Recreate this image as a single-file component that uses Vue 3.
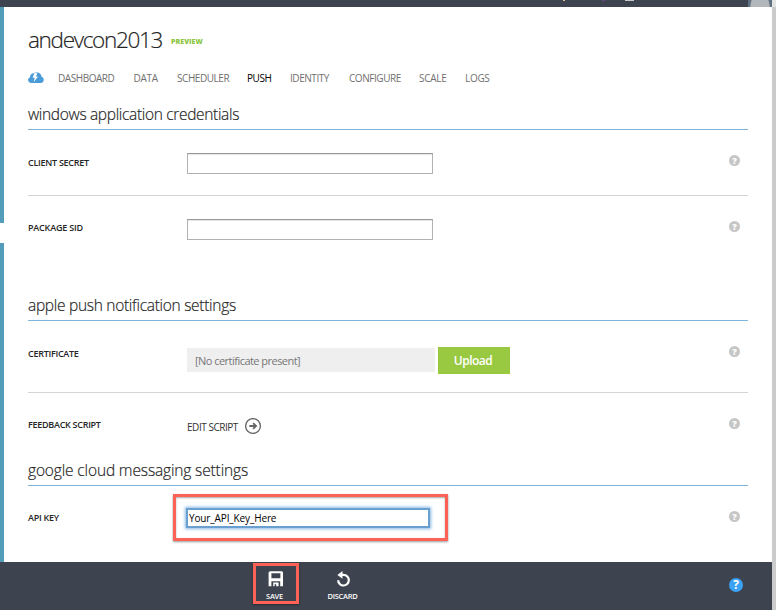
<script setup>
import { ref } from 'vue'

const tabs = ['DASHBOARD', 'DATA', 'SCHEDULER', 'PUSH', 'IDENTITY', 'CONFIGURE', 'SCALE', 'LOGS']
const active = ref('PUSH')
const clientSecret = ref('')
const packageSid = ref('')
const apiKey = ref('Your_API_Key_Here')
</script>

<template>
  <div class="shell">
    <header class="topbar">
      <div class="marks"><i class="m1"></i><i class="m2"></i><i class="m3"></i></div>
      <div class="avatar"><span></span></div>
    </header>
    <div class="body">
      <aside class="rail"><div class="rail-top"></div><div class="rail-bottom"></div></aside>
      <main class="content">
        <div class="title-row">
          <h1><span class="t-title">andevcon2013</span></h1>
          <span class="preview">PREVIEW</span>
        </div>
        <nav class="tabs">
          <svg class="cloud" width="16" height="12" viewBox="0 0 16 12">
            <path d="M3 11A3 3 0 0 1 2 5.2 4 4 0 0 1 5.5 1.2 5 5 0 0 1 9 .6 4.2 4.2 0 0 1 13.6 4.8 3.2 3.2 0 0 1 13 11Z" fill="#4a9bd8" />
            <path d="M6.6 .8 4.6 5.8H6.8L5.6 10.2 10 4.6H7.8L9.4 1.4Z" fill="#fff" />
          </svg>
          <a v-for="t in tabs" :key="t" :class="['tab', t.toLowerCase(), { active: t === active }]">{{ t }}</a>
        </nav>

        <section class="windows">
          <h2><span class="h-win">windows application credentials</span></h2>
          <div class="row r1">
            <label class="l-client">CLIENT SECRET</label>
            <div class="field"><input v-model="clientSecret" class="box" /></div>
            <span class="help">?</span>
          </div>
          <div class="row r2">
            <label class="l-package">PACKAGE SID</label>
            <div class="field"><input v-model="packageSid" class="box" /></div>
            <span class="help">?</span>
          </div>
        </section>

        <section class="apple">
          <h2><span class="h-apple">apple push notification settings</span></h2>
          <div class="row r3">
            <label class="l-cert">CERTIFICATE</label>
            <div class="field upload-field">
              <div class="file"><span>[No certificate present]</span></div>
              <button class="upload">Upload</button>
            </div>
            <span class="help">?</span>
          </div>
          <div class="row r4">
            <label class="l-feed">FEEDBACK SCRIPT</label>
            <div class="field edit">
              <span class="edit-text">EDIT SCRIPT</span>
              <svg width="17" height="17" viewBox="0 0 17 17" fill="none" stroke="#666">
                <circle cx="8" cy="8" r="7.4" stroke-width="1.3" />
                <path d="M4.3 8H11M8.1 5.1 11.1 8 8.1 10.9" stroke-width="1.8" />
              </svg>
            </div>
            <span class="help">?</span>
          </div>
        </section>

        <section class="google">
          <h2><span class="h-google">google cloud messaging settings</span></h2>
          <div class="row r5">
            <label class="l-api">API KEY</label>
            <div class="highlight"><input v-model="apiKey" class="key" spellcheck="false" /></div>
            <span class="help">?</span>
          </div>
        </section>
      </main>
    </div>
    <footer class="commands">
      <button class="cmd save">
        <svg width="16" height="16" viewBox="0 0 16 16">
          <path fill="#fff" fill-rule="evenodd" d="M2 .3H14L15 1.3V15.3H12.2V10.3H3.4V15.3H.6V1.3ZM3.4 2.2V7.2H12.4V2.2ZM5.2 11.6H10.6V15.3H8.2V13.2H6.6V15.3H5.2Z" />
        </svg>
        <span>SAVE</span>
      </button>
      <button class="cmd discard">
        <svg width="16" height="16" viewBox="0 0 16 16">
          <path d="M5.5 3.9H8.6A5.3 5.3 0 1 1 3.2 9.2" fill="none" stroke="#fff" stroke-width="2.2" />
          <path d="M2.4 3.9 7.5 0V7.8Z" fill="#fff" />
        </svg>
        <span>DISCARD</span>
      </button>
      <span class="help-blue">?</span>
    </footer>
    <div class="edge"></div>
  </div>
</template>

<style>
body { margin: 0; overflow: hidden; }
</style>

<style scoped>
.shell {
  width: 776px; height: 610px; background: #fff; color: #333;
  display: grid; grid-template: 7px 555px 48px / 772px 4px;
  font-family: "Open Sans", "Noto Sans", sans-serif;
}
.shell * { box-sizing: border-box; }
button { border: 0; padding: 0; font-family: inherit; }
h1, h2 { margin: 0; white-space: nowrap; }
.topbar { grid-area: 1 / 1; background: #3e444f; display: flex; justify-content: space-between; }
.marks { display: flex; padding-left: 563px; height: 1px; }
.marks i { height: 1px; }
.m1 { width: 2px; background: #d9c08f; }
.m2 { width: 3px; margin-left: 37px; background: #68487c; }
.m3 { width: 9px; margin-left: 20px; background: #c6cacd; }
.avatar { width: 24px; height: 7px; background: #627181; overflow: hidden; padding-left: 2px; }
.avatar span { display: block; width: 20px; height: 24px; border-radius: 6px 6px 0 0 / 16px 16px 0 0; background: #b2b7bb; margin-top: -5px; }
.edge { grid-area: 1 / 2 / 4 / 3; background: #cbcbcb; border-top: 7px solid #e4e4e4; }
.body { grid-area: 2 / 1; display: flex; min-width: 0; }
.rail { width: 4px; display: flex; flex-direction: column; gap: 20px; }
.rail-top { height: 216px; background: #539dbb; }
.rail-bottom { flex: 1; background: #539dbb; }
.content { width: 744px; padding-left: 24px; }
.title-row { height: 57px; padding-top: 17px; display: flex; gap: 9px; }
h1 { width: 134px; font-size: 22.5px; line-height: 32px; font-weight: 300; color: #222; -webkit-text-stroke: .2px #333; }
.t-title { letter-spacing: -1.32px; }
.preview { font-size: 7px; line-height: 10px; font-weight: 800; color: #8cc63f; margin-top: 13px; letter-spacing: .05px; }
.tabs { display: flex; height: 28px; align-items: center; }
.cloud { margin-right: 14px; }
.tab { font-size: 10px; line-height: 14px; color: #707070; letter-spacing: -.45px; white-space: nowrap; }
.tab.active { color: #000; letter-spacing: -.4px; }
.dashboard { width: 75.5px; } .data { width: 43.5px; } .scheduler { width: 70px; } .push { width: 43px; }
.data, .logs, .scale { letter-spacing: -.3px; }
.identity { width: 59px; } .configure { width: 70px; } .scale { width: 46px; }
h2 { height: 37px; padding-top: 9px; line-height: 24px; font-size: 15.5px; color: #222; border-bottom: 1px solid #81b4da; font-weight: 300; -webkit-text-stroke: .2px #333; }
.windows h2 { height: 38px; padding-top: 10px; }
.h-win { letter-spacing: -.33px; }
.h-apple { letter-spacing: -.29px; }
.h-google { letter-spacing: -.14px; }
.row { display: grid; grid-template-columns: 159px 1fr 20px; }
.row label { font-size: 9px; line-height: 12px; font-weight: 600; color: #262626; white-space: nowrap; letter-spacing: -.28px; }
.row .l-package { letter-spacing: -.2px; }
.r1 { height: 66px; border-bottom: 1px solid #d4d4d4; }
.r1 label { padding-top: 27px; } .r1 .field { padding-top: 23px; } .r1 .help { margin-top: 25px; }
.r2 { height: 88px; }
.r2 label { padding-top: 26px; } .r2 .field { padding-top: 23px; } .r2 .help { margin-top: 25px; }
.box { display: block; width: 246px; height: 21px; border: 1px solid #b2b2b2; border-top-color: #999; box-shadow: inset 0 1px 1px #e5e5e5; background: #fff; outline: 0; }
.help { width: 11px; height: 11px; border-radius: 50%; background: #c6c6c6; color: #fff; font: 800 9px/11px "Open Sans", sans-serif; text-align: center; margin-left: 1px; }
.r3 { height: 72px; border-bottom: 1px solid #d4d4d4; }
.r3 label { padding-top: 27px; } .r3 .help { margin-top: 25px; }
.upload-field { display: flex; padding-top: 26px; gap: 3px; }
.file { width: 248px; height: 24px; margin-top: 1px; background: #efefef; color: #777; padding-left: 8px; font-size: 11px; line-height: 25px; letter-spacing: -.53px; }
.upload { width: 72px; height: 27px; background: #99c941; color: #fff; font-size: 12px; line-height: 27px; font-weight: 600; letter-spacing: -.5px; padding-right: 2px; }
.r4 { height: 56px; }
.r4 label { padding-top: 26px; } .r4 .help { margin-top: 25px; }
.edit { display: flex; padding-top: 25px; }
.edit svg { margin-left: 6px; }
.edit-text { width: 52px; font-size: 10px; line-height: 18px; letter-spacing: -.46px; white-space: nowrap; color: #333; }
.r5 { height: 76px; grid-template-columns: 145px 1fr 20px; }
.r5 label { padding-top: 26px; } .r5 .help { margin-top: 25px; }
.highlight { width: 275px; height: 47px; margin-top: 8px; border: 3px solid #fc6256; padding: 11px 10px; box-shadow: 0 1px 2px #999, inset 0 1px 2px #aaa; }
.key { display: block; width: 244px; height: 20px; border: 2px solid #69a0d0; outline: 0; box-shadow: 0 0 3px 1px #86b9e5; padding: 0 1px; font: 10px/16px "Open Sans", sans-serif; letter-spacing: -.13px; color: #000; background: #fff; }
.commands { grid-area: 3 / 1; background: #3e444f; display: flex; align-items: flex-start; }
.cmd { display: flex; flex-direction: column; align-items: center; background: transparent; color: #fff; font-size: 7.5px; line-height: 10px; font-weight: 600; letter-spacing: -.25px; }
.save { width: 46px; height: 41px; margin: 1px 0 0 253px; border: 3px solid #fc6256; padding: 5px 1px 0 0; box-shadow: 0 1px 2px #252a31; }
.cmd svg { flex: none; }
.cmd span { margin-top: 4px; }
.save span { margin-right: 2px; }
.discard { width: 40px; margin: 9px 0 0 24px; }
.discard span { margin-right: 1px; }
.help-blue { width: 14px; height: 14px; margin: 16px 0 0 366px; border-radius: 50%; background: #3ba1f2; color: #fff; font-size: 12px; line-height: 14px; font-weight: 700; text-align: center; }
</style>
